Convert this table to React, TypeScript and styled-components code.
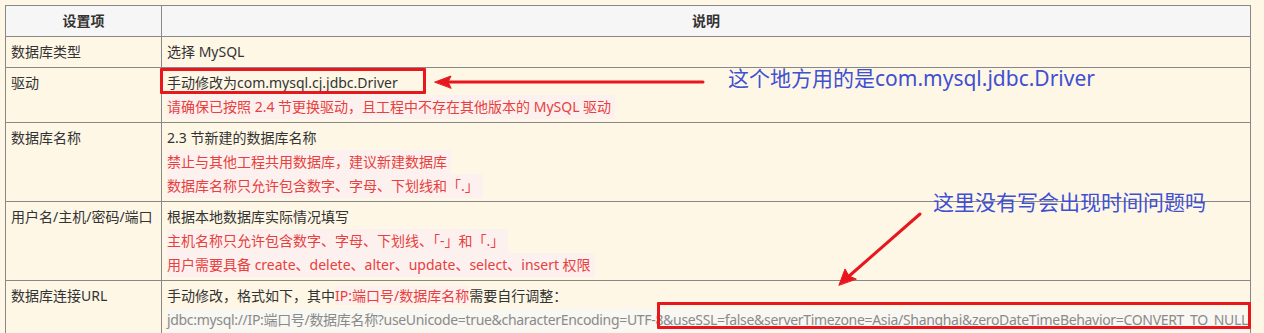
import React from "react";
import styled, { createGlobalStyle } from "styled-components";

const GlobalStyle = createGlobalStyle`
  html, body {
    margin: 0;
    padding: 0;
    background: #fef7e6;
  }
  body {
    font-family: "Noto Sans", "Noto Sans CJK SC", sans-serif;
    color: #333333;
  }
`;

const Page = styled.div`
  position: relative;
  width: 1264px;
  height: 333px;
  padding: 5px 0 0 5px;
  box-sizing: border-box;
  overflow: hidden;
`;

const Table = styled.table`
  width: 1246px;
  table-layout: fixed;
  border-collapse: collapse;
  border: 1px solid #888888;
  font-size: 14px;
  line-height: 24px;
`;

const Col = styled.col<{ $w?: number }>`
  width: ${(p) => (p.$w ? `${p.$w}px` : "auto")};
`;

const Th = styled.th`
  height: 30px;
  padding: 0 5px;
  background: #f6f6f6;
  border: 1px solid #888888;
  font-weight: bold;
  text-align: center;
  color: #333333;
`;

const Td = styled.td`
  padding: 3px 5px;
  border: 1px solid #888888;
  vertical-align: top;
  text-align: left;
  white-space: nowrap;
`;

const Line = styled.div`
  white-space: nowrap;
`;

const Note = styled.div`
  width: fit-content;
  padding-right: 4px;
  color: #e8403c;
  background: #fdf1ef;
  white-space: nowrap;
`;

const Mark = styled.span`
  color: #e8403c;
  background: #fdf1ef;
`;

const Code = styled.div`
  color: #8a8a8a;
  background: #f8f7f2;
  white-space: nowrap;
  letter-spacing: -0.32px;
`;

const Box = styled.div<{ $x: number; $y: number; $w: number; $h: number }>`
  position: absolute;
  left: ${(p) => p.$x}px;
  top: ${(p) => p.$y}px;
  width: ${(p) => p.$w}px;
  height: ${(p) => p.$h}px;
  border: 3px solid #e8171d;
  box-sizing: border-box;
  border-radius: 1px;
`;

const Comment = styled.div<{ $x: number; $y: number }>`
  position: absolute;
  left: ${(p) => p.$x}px;
  top: ${(p) => p.$y}px;
  font-family: "Noto Sans", "Noto Sans CJK SC", sans-serif;
  font-size: 21px;
  line-height: 26px;
  color: #3f50d2;
  white-space: nowrap;
`;

const Arrows = styled.svg`
  position: absolute;
  left: 0;
  top: 0;
  pointer-events: none;
`;

export default function App() {
  return (
    <Page>
      <GlobalStyle />
      <Table>
        <colgroup>
          <Col $w={156} />
          <Col />
        </colgroup>
        <thead>
          <tr>
            <Th>设置项</Th>
            <Th>说明</Th>
          </tr>
        </thead>
        <tbody>
          <tr>
            <Td>数据库类型</Td>
            <Td>
              <Line>选择 MySQL</Line>
            </Td>
          </tr>
          <tr>
            <Td>驱动</Td>
            <Td>
              <Line>手动修改为com.mysql.cj.jdbc.Driver</Line>
              <Note>请确保已按照 2.4 节更换驱动，且工程中不存在其他版本的 MySQL 驱动</Note>
            </Td>
          </tr>
          <tr>
            <Td>数据库名称</Td>
            <Td>
              <Line>2.3 节新建的数据库名称</Line>
              <Note>禁止与其他工程共用数据库，建议新建数据库</Note>
              <Note>数据库名称只允许包含数字、字母、下划线和「.」</Note>
            </Td>
          </tr>
          <tr>
            <Td>用户名/主机/密码/端口</Td>
            <Td>
              <Line>根据本地数据库实际情况填写</Line>
              <Note>主机名称只允许包含数字、字母、下划线、「-」和「.」</Note>
              <Note>用户需要具备 create、delete、alter、update、select、insert 权限</Note>
            </Td>
          </tr>
          <tr>
            <Td>数据库连接URL</Td>
            <Td>
              <Line>
                手动修改，格式如下，其中<Mark>IP:端口号/数据库名称</Mark>需要自行调整：
              </Line>
              <Code>
                jdbc:mysql://IP:端口号/数据库名称?useUnicode=true&amp;characterEncoding=UTF-8&amp;useSSL=false&amp;serverTimezone=Asia/Shanghai&amp;zeroDateTimeBehavior=CONVERT_TO_NULL
              </Code>
            </Td>
          </tr>
        </tbody>
      </Table>

      <Box $x={160} $y={68} $w={266} $h={26} />
      <Box $x={657} $y={302} $w={594} $h={27} />

      <Comment $x={728} $y={65}>这个地方用的是com.mysql.jdbc.Driver</Comment>
      <Comment $x={933} $y={189}>这里没有写会出现时间问题吗</Comment>

      <Arrows width={1264} height={333} viewBox="0 0 1264 333">
        <g fill="#e8171d" stroke="#e8171d" strokeLinecap="round">
          <line x1={703} y1={82} x2={446} y2={82} strokeWidth={3} />
          <polygon points="435,82 451,76 448,82 451,88" strokeWidth={1} />
          <line x1={920} y1={214} x2={848} y2={277} strokeWidth={3} />
          <polygon points="839,285 845,269 849,276 856,279" strokeWidth={1} />
        </g>
      </Arrows>
    </Page>
  );
}
